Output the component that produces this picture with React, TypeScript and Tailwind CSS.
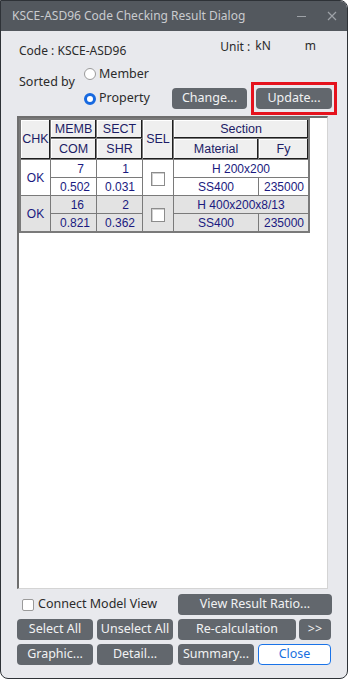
import React from 'react'

const ui = { fontFamily: '"Noto Sans", "Open Sans", sans-serif' }
const tbl = { fontFamily: '"Liberation Sans", Arial, sans-serif' }

function Btn({ label, className = '' }: { label: string; className?: string }) {
  return (
    <button
      className={`h-[21px] rounded-[4px] bg-[#62676d] text-[12.5px] leading-none text-[#f1f2f3] ${className}`}
      style={ui}
    >
      {label}
    </button>
  )
}

function Radio({ checked }: { checked?: boolean }) {
  return checked ? (
    <span className="box-border inline-block h-[12px] w-[12px] rounded-full border-[3px] border-[#1769e0] bg-white" />
  ) : (
    <span className="box-border inline-block h-[12px] w-[12px] rounded-full border border-[#9a9a9a] bg-white" />
  )
}

function Head({ children, className = '' }: { children: React.ReactNode; className?: string }) {
  return (
    <div
      className={`flex items-center justify-center bg-[#efefef] text-[12.5px] text-[#1c1c66] shadow-[inset_-1px_-1px_0_#1e1e1e,inset_1px_1px_0_#ffffff] ${className}`}
    >
      {children}
    </div>
  )
}

function Cell({ children, className = '', gray }: { children?: React.ReactNode; className?: string; gray?: boolean }) {
  return (
    <div className={`flex items-center text-[12px] text-[#1a1a80] ${gray ? 'bg-[#e3e3e3]' : 'bg-white'} ${className}`}>
      {children}
    </div>
  )
}

function Check() {
  return <span className="box-border inline-block h-[14px] w-[14px] border border-[#8c8c8c] bg-white shadow-[inset_1px_1px_0_#d0d0d0]" />
}

const rows = [
  { chk: 'OK', memb: '7', sect: '1', com: '0.502', shr: '0.031', sec: 'H 200x200', mat: 'SS400', fy: '235000', gray: false },
  { chk: 'OK', memb: '16', sect: '2', com: '0.821', shr: '0.362', sec: 'H 400x200x8/13', mat: 'SS400', fy: '235000', gray: true },
]

export default function App() {
  return (
    <div className="h-[681px] w-[348px] bg-white">
      <div className="flex h-[679px] w-[348px] flex-col overflow-hidden rounded-b-[8px] rounded-tr-[8px] border border-[#2e3237] bg-[#e8e9ed]">
        {/* title bar */}
        <div className="flex h-[30px] shrink-0 items-center bg-[#53585e] pl-[11px] pr-[9px]" style={ui}>
          <span className="text-[12px] text-[#c9cbce]">KSCE-ASD96 Code Checking Result Dialog</span>
          <span className="ml-auto mr-[21px] mt-[1px] h-px w-[9px] bg-[#9ea2a7]" />
          <svg width="10" height="10" viewBox="0 0 10 10" className="mr-[1px]">
            <path d="M1 1L9 9M9 1L1 9" stroke="#9ea2a7" strokeWidth="1.2" />
          </svg>
        </div>

        {/* code / unit */}
        <div className="flex h-[33px] px-[18px] text-[12px] text-[#2b2b2b]" style={ui}>
          <span className="mt-[11px]">Code : KSCE-ASD96</span>
          <span className="ml-auto mt-[7px]">Unit :</span>
          <span className="ml-[5px] mt-[6px]">kN</span>
          <span className="ml-[34px] mr-[13px] mt-[6px]">m</span>
        </div>

        {/* sorted by */}
        <div className="flex pl-[18px] pr-[15px] text-[12.5px] text-[#2b2b2b]" style={ui}>
          <span className="mt-[9px] w-[65px] shrink-0">Sorted by</span>
          <div className="flex flex-1 flex-col">
            <div className="flex h-[20px] items-center gap-[3px]">
              <Radio />
              <span>Member</span>
            </div>
            <div className="mt-[4px] flex h-[21px] items-center gap-[3px]">
              <Radio checked />
              <span>Property</span>
              <Btn label="Change..." className="ml-auto w-[75px]" />
              <div className="relative ml-[6px]">
                <Btn label="Update..." className="w-[76px]" />
                <span className="pointer-events-none absolute -bottom-[6px] -left-[5px] -right-[5px] -top-[6px] border-[3px] border-[#e5121d]" />
              </div>
            </div>
          </div>
        </div>

        {/* result area */}
        <div className="ml-[16px] mt-[7px] h-[473px] w-[311px] border-b border-l-2 border-r border-t-2 border-b-[#d4d4d4] border-l-[#6e6e6e] border-r-[#d4d4d4] border-t-[#6e6e6e] bg-white">
          <div
            className="grid w-fit grid-cols-[29px_45px_45px_30px_84px_49px] grid-rows-[18px_20px_17px_17px_17px_17px] gap-px border-2 border-[#7a7a7a] bg-[#7a7a7a]"
            style={tbl}
          >
            <Head className="row-span-2">CHK</Head>
            <Head>MEMB</Head>
            <Head>SECT</Head>
            <Head className="row-span-2">SEL</Head>
            <Head className="col-span-2">Section</Head>
            <Head>COM</Head>
            <Head>SHR</Head>
            <Head>Material</Head>
            <Head>Fy</Head>
            {rows.map((r) => (
              <React.Fragment key={r.memb}>
                <Cell gray={r.gray} className="row-span-2 justify-center">{r.chk}</Cell>
                <Cell gray={r.gray} className="justify-end pr-[12px]">{r.memb}</Cell>
                <Cell gray={r.gray} className="justify-end pr-[13px]">{r.sect}</Cell>
                <Cell gray={r.gray} className="row-span-2 justify-center pt-[3px]"><Check /></Cell>
                <Cell gray={r.gray} className="col-span-2 justify-center">{r.sec}</Cell>
                <Cell gray={r.gray} className="justify-end pr-[6px]">{r.com}</Cell>
                <Cell gray={r.gray} className="justify-end pr-[7px]">{r.shr}</Cell>
                <Cell gray={r.gray} className="justify-center">{r.mat}</Cell>
                <Cell gray={r.gray} className="justify-end pr-[4px]">{r.fy}</Cell>
              </React.Fragment>
            ))}
          </div>
        </div>

        {/* bottom buttons */}
        <div className="mt-[5px] flex flex-col gap-[4px] pl-[16px]" style={ui}>
          <div className="flex items-center">
            <div className="flex w-[161px] items-center gap-[4px] pl-[5px] text-[12.5px] text-[#2b2b2b]">
              <span className="box-border inline-block h-[12px] w-[12px] rounded-[2px] border border-[#9a9a9a] bg-white" />
              <span>Connect Model View</span>
            </div>
            <Btn label="View Result Ratio..." className="w-[154px]" />
          </div>
          <div className="flex items-center">
            <Btn label="Select All" className="w-[76px]" />
            <Btn label="Unselect All" className="ml-[4px] w-[76px]" />
            <Btn label="Re-calculation" className="ml-[5px] w-[118px]" />
            <Btn label=">>" className="ml-[3px] w-[32px]" />
          </div>
          <div className="flex items-center">
            <Btn label="Graphic..." className="w-[76px]" />
            <Btn label="Detail..." className="ml-[4px] w-[76px]" />
            <Btn label="Summary..." className="ml-[5px] w-[76px]" />
            <button
              className="ml-[4px] box-border h-[21px] w-[73px] rounded-[4px] border border-[#1a73e8] bg-white text-[12.5px] leading-none text-[#1a6fe0]"
              style={ui}
            >
              Close
            </button>
          </div>
        </div>
      </div>
    </div>
  )
}
